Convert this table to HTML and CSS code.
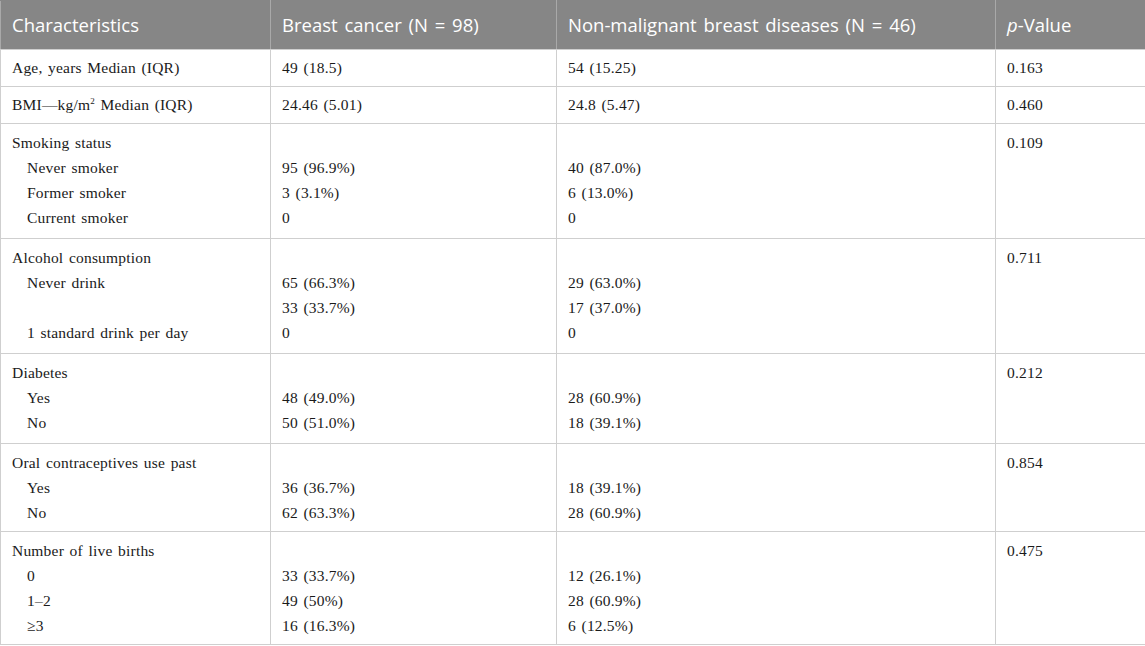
FILE: index.html
```html
<!DOCTYPE html>
<html>
<head>
<meta charset="utf-8">
<link rel="stylesheet" href="styles.css">
</head>
<body>
<table class="tbl">
  <colgroup>
    <col class="c1"><col class="c2"><col class="c3"><col class="c4">
  </colgroup>
  <thead>
    <tr>
      <th>Characteristics</th>
      <th>Breast cancer (N = 98)</th>
      <th>Non-malignant breast diseases (N = 46)</th>
      <th><i>p</i>-Value</th>
    </tr>
  </thead>
  <tbody>
    <tr class="single">
      <td>Age, years Median (IQR)</td>
      <td>49 (18.5)</td>
      <td>54 (15.25)</td>
      <td>0.163</td>
    </tr>
    <tr class="single">
      <td>BMI—kg/m<sup>2</sup> Median (IQR)</td>
      <td>24.46 (5.01)</td>
      <td>24.8 (5.47)</td>
      <td>0.460</td>
    </tr>
    <tr>
      <td>
        <div>Smoking status</div>
        <div class="sub">Never smoker</div>
        <div class="sub">Former smoker</div>
        <div class="sub">Current smoker</div>
      </td>
      <td><div>&nbsp;</div><div>95 (96.9%)</div><div>3 (3.1%)</div><div>0</div></td>
      <td><div>&nbsp;</div><div>40 (87.0%)</div><div>6 (13.0%)</div><div>0</div></td>
      <td><div>0.109</div></td>
    </tr>
    <tr>
      <td>
        <div>Alcohol consumption</div>
        <div class="sub">Never drink</div>
        <div class="sub">&nbsp;</div>
        <div class="sub">1 standard drink per day</div>
      </td>
      <td><div>&nbsp;</div><div>65 (66.3%)</div><div>33 (33.7%)</div><div>0</div></td>
      <td><div>&nbsp;</div><div>29 (63.0%)</div><div>17 (37.0%)</div><div>0</div></td>
      <td><div>0.711</div></td>
    </tr>
    <tr>
      <td>
        <div>Diabetes</div>
        <div class="sub">Yes</div>
        <div class="sub">No</div>
      </td>
      <td><div>&nbsp;</div><div>48 (49.0%)</div><div>50 (51.0%)</div></td>
      <td><div>&nbsp;</div><div>28 (60.9%)</div><div>18 (39.1%)</div></td>
      <td><div>0.212</div></td>
    </tr>
    <tr class="snug">
      <td>
        <div>Oral contraceptives use past</div>
        <div class="sub">Yes</div>
        <div class="sub">No</div>
      </td>
      <td><div>&nbsp;</div><div>36 (36.7%)</div><div>62 (63.3%)</div></td>
      <td><div>&nbsp;</div><div>18 (39.1%)</div><div>28 (60.9%)</div></td>
      <td><div>0.854</div></td>
    </tr>
    <tr class="snug">
      <td>
        <div>Number of live births</div>
        <div class="sub">0</div>
        <div class="sub">1–2</div>
        <div class="sub">≥3</div>
      </td>
      <td><div>&nbsp;</div><div>33 (33.7%)</div><div>49 (50%)</div><div>16 (16.3%)</div></td>
      <td><div>&nbsp;</div><div>12 (26.1%)</div><div>28 (60.9%)</div><div>6 (12.5%)</div></td>
      <td><div>0.475</div></td>
    </tr>
  </tbody>
</table>
</body>
</html>
```
FILE: styles.css
```css
html, body {
  margin: 0;
  padding: 0;
  background: #ffffff;
}

.tbl {
  width: 1145px;
  border-collapse: collapse;
  table-layout: fixed;
  border: 1px solid #cfcfcf;
}

.c1 { width: 270px; }
.c2 { width: 286px; }
.c3 { width: 439px; }
.c4 { width: 150px; }

.tbl th {
  background: #868686;
  color: #ffffff;
  font-family: "Open Sans", "Liberation Sans", sans-serif;
  font-weight: 400;
  font-size: 18.5px;
  word-spacing: 2px;
  text-align: left;
  height: 46px;
  padding: 0 11px 2px;
  border-left: 1px solid #a9a9a9;
  border-right: 1px solid #a9a9a9;
  border-top: 1px solid #868686;
  border-bottom: 1px solid #cfcfcf;
  vertical-align: middle;
}

.tbl th i {
  font-style: italic;
}

.tbl td {
  font-family: "Liberation Serif", "Times New Roman", serif;
  font-size: 15.5px;
  letter-spacing: 0.2px;
  word-spacing: 1.5px;
  color: #1a1a1a;
  line-height: 25px;
  padding: 6px 11px 8px;
  border: 1px solid #cfcfcf;
  vertical-align: top;
  text-align: left;
}

.tbl tr.single td {
  line-height: 23px;
  padding-bottom: 7px;
}

.tbl tr.snug td {
  padding-bottom: 6px;
}

.tbl td .sub {
  padding-left: 15px;
}

.tbl sup {
  font-size: 9px;
  line-height: 0;
  vertical-align: 6px;
}
```
